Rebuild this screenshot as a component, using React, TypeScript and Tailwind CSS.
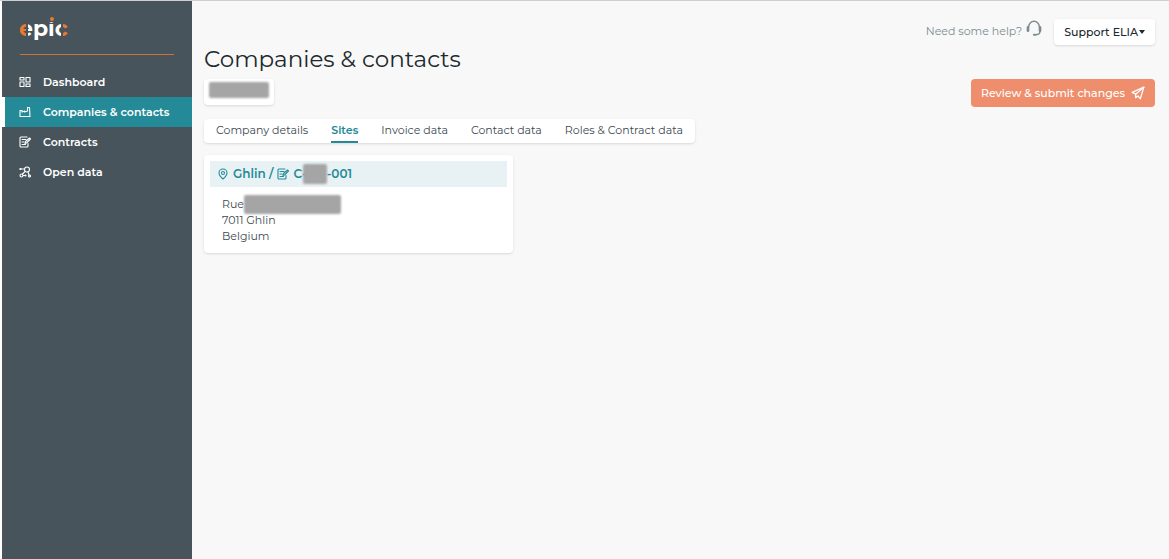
import type { ReactNode, SVGProps } from "react";
import clsx from "clsx";

type IconProps = SVGProps<SVGSVGElement>;

function Icon({ children, ...props }: IconProps & { children: ReactNode }) {
  return (
    <svg
      viewBox="0 0 24 24"
      fill="none"
      stroke="currentColor"
      strokeWidth={2.2}
      strokeLinecap="round"
      strokeLinejoin="round"
      aria-hidden="true"
      {...props}
    >
      {children}
    </svg>
  );
}

const DashboardIcon = (props: IconProps) => (
  <Icon {...props}>
    <rect x="2" y="3" width="8" height="5" />
    <rect x="14" y="3" width="8" height="9" />
    <rect x="2" y="12" width="8" height="9" />
    <rect x="14" y="16" width="8" height="5" />
  </Icon>
);

const FactoryIcon = (props: IconProps) => (
  <Icon {...props}>
    <path d="M2 21v-12h4v3l5-2v2l6-2V3h4l1 18z" />
  </Icon>
);

const ContractIcon = (props: IconProps) => (
  <Icon {...props}>
    <path d="M16 2H4C3 2 2 3 2 4v16c0 1 1 2 2 2h12c1 0 2-1 2-2v-5" />
    <path d="M6 7h8M6 12h4M6 17h7" />
    <path d="m12 15 1-4 8-7 2 2-8 8z" />
  </Icon>
);

const OpenDataIcon = (props: IconProps) => (
  <Icon {...props}>
    <circle cx="16" cy="7" r="5" />
    <circle cx="5" cy="19" r="3" />
    <circle cx="21" cy="20" r="2" />
    <path d="M2 6h8M7 16l5-5M18 12l2 6M8 19h5" />
    <circle cx="3" cy="6" r="1" />
    <circle cx="13" cy="19" r="1" />
  </Icon>
);

const PinIcon = (props: IconProps) => (
  <Icon {...props}>
    <path d="M12 22S4 15 4 10a8 8 0 0 1 16 0C20 15 12 22 12 22z" />
    <circle cx="12" cy="10" r="3" />
  </Icon>
);

const HeadsetIcon = (props: IconProps) => (
  <Icon {...props}>
    <path d="M4 10a8 8 0 0 1 16 0" />
    <path d="M3 11v5M21 11v5" strokeWidth={4} />
    <path d="M21 17c0 3-2 5-6 5" />
    <path d="M12 22h2" strokeWidth={3} />
  </Icon>
);

const SendIcon = (props: IconProps) => (
  <Icon {...props}>
    <path d="M22 2 2 11l6 3v6l4-3 4 5z" />
    <path d="M22 2 8 14" />
  </Icon>
);

function Logo() {
  return (
    <svg className="h-8 w-14" viewBox="0 0 56 32" role="img" aria-label="epic">
      <defs>
        <linearGradient id="logo-fill" gradientUnits="userSpaceOnUse" x1="0" y1="0" x2="50" y2="0">
          <stop offset="0.14" stopColor="#ea7a2f" />
          <stop offset="0.14" stopColor="#fff" />
          <stop offset="0.84" stopColor="#fff" />
          <stop offset="0.84" stopColor="#ea7a2f" />
        </linearGradient>
      </defs>
      <text x="-1" y="23" className="font-['Montserrat','Inter',sans-serif] text-[22px] font-bold" fill="url(#logo-fill)">
        epic
      </text>
      <path d="M7 8v17M42 8v17" stroke="#47545c" strokeWidth="2" />
      <rect x="29" y="1" width="7" height="8" fill="#47545c" />
      <circle cx="32" cy="6" r="2" fill="#ea7a2f" />
    </svg>
  );
}

const NAV = [
  { label: "Dashboard", icon: DashboardIcon },
  { label: "Companies & contacts", icon: FactoryIcon, active: true },
  { label: "Contracts", icon: ContractIcon },
  { label: "Open data", icon: OpenDataIcon },
];

const TABS = ["Company details", "Sites", "Invoice data", "Contact data", "Roles & Contract data"];

function Sidebar() {
  return (
    <aside className="w-48 shrink-0 border-l-2 border-white bg-[#47545c]">
      <div className="mx-[18px] pt-3">
        <Logo />
        <div className="mt-[9px] h-px bg-[#d07436]" />
      </div>
      <nav className="mt-3">
        {NAV.map(({ label, icon: NavIcon, active }) => (
          <a
            key={label}
            href="#"
            aria-current={active ? "page" : undefined}
            className={clsx(
              "flex h-[30px] items-center gap-3 border-l-3 pl-3.5 text-[11px] font-semibold text-white",
              active ? "border-white bg-[#248a98]" : "border-transparent",
            )}
          >
            <NavIcon className="size-3" />
            {label}
          </a>
        ))}
      </nav>
    </aside>
  );
}

/** Grey patch over a private value. */
function Redacted({ className }: { className: string }) {
  return <span className={clsx("block rounded-xs bg-[#a5a5a5] blur-[1px]", className)} />;
}

function SiteCard() {
  return (
    <article className="mt-3 w-[309px] max-w-full rounded-sm bg-white p-1.5 pb-[9px] shadow">
      <h2 className="flex h-[26px] items-center bg-[#e8f2f4] pl-[7px] text-[12px] font-semibold text-[#248a98]">
        <PinIcon className="mr-1 size-3" />
        Ghlin /
        <ContractIcon className="mx-1 size-3" />
        C-
        <Redacted className="-ml-1 h-5 w-6" />
        -001
      </h2>
      <address className="mt-[9px] pl-3 text-[11px] leading-4 text-[#3c4950] not-italic">
        <div className="flex h-4 items-center">
          Rue
          <Redacted className="h-[19px] w-[97px]" />
        </div>
        <div>7011 Ghlin</div>
        <div>Belgium</div>
      </address>
    </article>
  );
}

export default function App() {
  return (
    <div className="flex min-h-screen border-t border-[#cfcfcf] bg-[#f8f8f8] font-['Montserrat','Inter',sans-serif]">
      <Sidebar />
      <main className="min-w-0 flex-1 pt-[18px] pr-3.5 pl-3">
        <header className="flex items-start justify-between">
          <div className="flex flex-col items-start pt-6">
            <h1 className="text-[23px] leading-8 text-[#20282c]">Companies & contacts</h1>
            <button
              type="button"
              aria-label="Select company"
              className="mt-1 h-[26px] rounded-sm bg-white px-[5px] shadow"
            >
              <Redacted className="mb-1 h-4 w-[60px]" />
            </button>
          </div>
          <div className="flex flex-col items-end">
            <div className="flex items-center gap-3">
              <a href="#" className="flex items-center gap-1 pb-0.5 text-[11px] text-[#7c8c92]">
                Need some help?
                <HeadsetIcon className="mb-1.5 size-4" />
              </a>
              <button
                type="button"
                className="flex h-[26px] items-center gap-px rounded-sm bg-white px-2.5 text-[11px] font-medium text-[#20282c] shadow"
              >
                Support ELIA
                <svg className="mb-px w-1.5" viewBox="0 0 6 4" aria-hidden="true">
                  <path d="M0 0h6L3 4z" fill="currentColor" />
                </svg>
              </button>
            </div>
            <button
              type="button"
              className="mt-[34px] flex h-7 items-center gap-1.5 rounded-sm bg-[#ee8e6c] px-2.5 text-[11px] font-medium text-white"
            >
              Review & submit changes
              <SendIcon className="size-3.5" />
            </button>
          </div>
        </header>

        <nav className="mt-3 flex h-6 w-fit gap-[23px] rounded-sm bg-white px-3 text-[11px] text-[#3c4950] shadow">
          {TABS.map((tab) => (
            <a
              key={tab}
              href="#"
              className={clsx(
                "flex items-center border-b-2",
                tab === "Sites" ? "border-[#248a98] font-semibold text-[#248a98]" : "border-transparent",
              )}
            >
              {tab}
            </a>
          ))}
        </nav>

        <SiteCard />
      </main>
    </div>
  );
}
